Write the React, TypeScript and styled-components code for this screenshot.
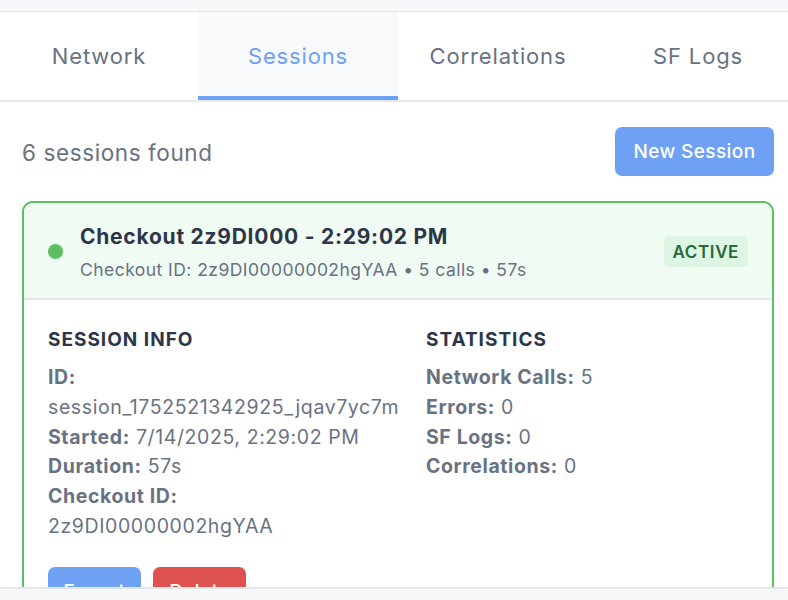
import React from "react";
import styled, { createGlobalStyle } from "styled-components";

const Global = createGlobalStyle`
  html, body { margin: 0; padding: 0; background: #ffffff; }
  body { font-family: Inter, "Noto Sans", "DejaVu Sans", sans-serif; -webkit-font-smoothing: antialiased; }
  * { box-sizing: border-box; }
`;

const Page = styled.div`
  height: 600px;
  display: flex;
  flex-direction: column;
  overflow: hidden;
  background: #ffffff;
`;

const TopStrip = styled.div`
  flex: 0 0 12px;
  background: #f7f8fa;
  border-bottom: 1px solid #e3e7ec;
`;

const TabBar = styled.div`
  flex: 0 0 90px;
  display: grid;
  grid-template-columns: 198px repeat(3, 200px);
  border-bottom: 2px solid #e5e8ed;
  overflow: hidden;
`;

const Tab = styled.div<{ $active?: boolean }>`
  display: flex;
  align-items: center;
  justify-content: center;
  padding-bottom: 1px;
  font-size: 22px;
  letter-spacing: 0.85px;
  color: ${(p) => (p.$active ? "#6ea1f4" : "#697282")};
  background: ${(p) => (p.$active ? "#f8f9fb" : "#ffffff")};
  box-shadow: ${(p) => (p.$active ? "inset 0 -4px 0 #6ea1f4" : "none")};
`;

const Main = styled.div`
  flex: 1;
  overflow: hidden;
  padding: 25px 14px 0 22px;
`;

const Toolbar = styled.div`
  display: flex;
  align-items: center;
  justify-content: space-between;
  height: 49px;
`;

const Count = styled.div`
  font-size: 22.5px;
  color: #697282;
  letter-spacing: 0.6px;
  padding-top: 2px;
`;

const Button = styled.button<{ $color: string; $w: number }>`
  border: none;
  border-radius: 7px;
  background: ${(p) => p.$color};
  color: #ffffff;
  font-family: inherit;
  font-size: 19px;
  font-weight: 500;
  letter-spacing: 0.4px;
  height: 49px;
  width: ${(p) => p.$w}px;
  padding: 0;
`;

const Card = styled.div`
  margin-top: 25px;
  border: 2px solid #5cbf62;
  border-radius: 11px;
  overflow: hidden;
`;

const CardHeader = styled.div`
  display: flex;
  align-items: center;
  gap: 17px;
  padding: 2px 24px 0;
  height: 97px;
  background: #f0fbf3;
  border-bottom: 2px solid #e3e7eb;
`;

const Dot = styled.span`
  flex: 0 0 15px;
  width: 15px;
  height: 15px;
  border-radius: 50%;
  background: #5cbf62;
`;

const HeaderText = styled.div`
  flex: 1;
  display: flex;
  flex-direction: column;
  gap: 10px;
`;

const Title = styled.div`
  font-size: 21px;
  font-weight: 700;
  color: #2d3648;
  letter-spacing: 0.75px;
`;

const Subtitle = styled.div`
  font-size: 17.5px;
  color: #697282;
  letter-spacing: 0.45px;
`;

const Badge = styled.span`
  background: #dcf6e3;
  color: #276a3a;
  font-size: 17px;
  font-weight: 600;
  letter-spacing: 0.6px;
  border-radius: 5px;
  padding: 0 9px;
  height: 31px;
  display: flex;
  align-items: center;
`;

const CardBody = styled.div`
  padding: 28px 24px 24px;
`;

const Columns = styled.div`
  display: grid;
  grid-template-columns: 354px 1fr;
  column-gap: 24px;
`;

const Section = styled.div`
  display: flex;
  flex-direction: column;
`;

const SectionTitle = styled.div`
  font-size: 19px;
  line-height: 23px;
  font-weight: 700;
  color: #2d3648;
  letter-spacing: 1px;
  margin-bottom: 12px;
`;

const Line = styled.div`
  font-size: 19.5px;
  line-height: 29.8px;
  color: #697282;
  letter-spacing: 0.6px;
  white-space: nowrap;
`;

const Label = styled.b`
  font-weight: 700;
`;

const Actions = styled.div`
  display: flex;
  gap: 12px;
  margin-top: 25px;
`;

const Footer = styled.div`
  flex: 0 0 13px;
  background: #f7f8fa;
  border-top: 2px solid #e3e7ec;
`;

export default function App() {
  return (
    <>
      <Global />
      <Page>
        <TopStrip />
        <TabBar>
          <Tab>Network</Tab>
          <Tab $active>Sessions</Tab>
          <Tab>Correlations</Tab>
          <Tab>SF Logs</Tab>
        </TabBar>
        <Main>
          <Toolbar>
            <Count>6 sessions found</Count>
            <Button $color="#6ea1f4" $w={159}>New Session</Button>
          </Toolbar>
          <Card>
            <CardHeader>
              <Dot />
              <HeaderText>
                <Title>Checkout 2z9DI000 - 2:29:02 PM</Title>
                <Subtitle>Checkout ID: 2z9DI00000002hgYAA • 5 calls • 57s</Subtitle>
              </HeaderText>
              <Badge>ACTIVE</Badge>
            </CardHeader>
            <CardBody>
              <Columns>
                <Section>
                  <SectionTitle>SESSION INFO</SectionTitle>
                  <Line><Label>ID:</Label></Line>
                  <Line>session_1752521342925_jqav7yc7m</Line>
                  <Line><Label>Started:</Label> 7/14/2025, 2:29:02 PM</Line>
                  <Line><Label>Duration:</Label> 57s</Line>
                  <Line><Label>Checkout ID:</Label></Line>
                  <Line>2z9DI00000002hgYAA</Line>
                </Section>
                <Section>
                  <SectionTitle>STATISTICS</SectionTitle>
                  <Line><Label>Network Calls:</Label> 5</Line>
                  <Line><Label>Errors:</Label> 0</Line>
                  <Line><Label>SF Logs:</Label> 0</Line>
                  <Line><Label>Correlations:</Label> 0</Line>
                </Section>
              </Columns>
              <Actions>
                <Button $color="#6ea1f4" $w={93}>Export</Button>
                <Button $color="#dd5250" $w={93}>Delete</Button>
              </Actions>
            </CardBody>
          </Card>
        </Main>
        <Footer />
      </Page>
    </>
  );
}
